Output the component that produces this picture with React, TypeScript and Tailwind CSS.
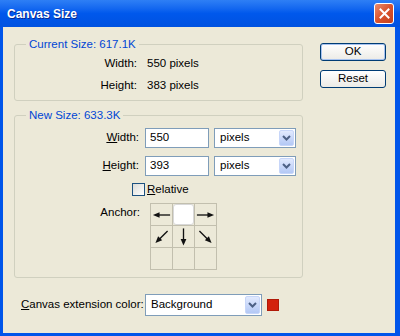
import React from 'react'

const font = "font-['Liberation_Sans',Arial,sans-serif]"

const Chevron = () => (
    <svg width="9" height="6" viewBox="0 0 9 6">
        <path d="M1 1 L4.5 4.5 L8 1" fill="none" stroke="#4D6185" strokeWidth="2" />
    </svg>
)

const Select = ({ value, width, height }: { value: string; width: string; height: string }) => (
    <div className={`flex items-center ${width} ${height} border border-[#7F9DB9] bg-white pl-[5px] pr-[1px]`}>
        <span className="flex-1 text-black">{value}</span>
        <div className="w-[15px] h-[calc(100%-2px)] rounded-[2px] bg-gradient-to-b from-[#E2EAFE] to-[#B3C8F5] border border-[#C7D6F9] flex items-center justify-center">
            <Chevron />
        </div>
    </div>
)

const Arrow = ({ angle }: { angle: number }) => (
    <svg width="22" height="22" viewBox="0 0 22 22">
        <g transform={`rotate(${angle} 11 11)`}>
            <line x1="2" y1="11" x2="15" y2="11" stroke="#111" strokeWidth="1.4" />
            <polygon points="20,11 13,8 13,14" fill="#111" />
        </g>
    </svg>
)

const GroupBox = ({ title, children, className }: { title: string; children: React.ReactNode; className?: string }) => (
    <fieldset className={`border border-[#D0D0BF] rounded-[3px] ${className || ''}`}>
        <legend className="ml-[11px] px-[3px] text-[#0046D5] leading-[13px]">{title}</legend>
        {children}
    </fieldset>
)

// anchor grid: arrow angle per cell, 'center' = selected cell
const anchorCells: (number | null | 'center')[] = [180, 'center', 0, 135, 90, 45, null, null, null]

export default function App() {
    return (
        <div className={`w-[400px] h-[336px] flex flex-col ${font} text-[11.5px] text-black`}>
            {/* title bar */}
            <div className="h-[27px] flex items-center pl-[7px] pr-[6px] bg-gradient-to-b from-[#2E7FF5] via-[#0058EC] to-[#0052E0]">
                <span className="flex-1 text-white font-bold text-[12px] [text-shadow:1px_1px_#0A2A8F]">Canvas Size</span>
                <button className="w-[20px] h-[21px] rounded-[3px] border border-white bg-gradient-to-br from-[#E98B6A] via-[#D9522C] to-[#C1411F] flex items-center justify-center">
                    <svg width="11" height="11" viewBox="0 0 11 11">
                        <path d="M1.5 1.5 L9.5 9.5 M9.5 1.5 L1.5 9.5" stroke="white" strokeWidth="2" strokeLinecap="square" />
                    </svg>
                </button>
            </div>

            {/* body */}
            <div className="flex-1 bg-[#ECE9D8] border-l-[3px] border-r-[5px] border-b-[3px] border-[#0055EA] flex flex-col pl-[11px] pr-[9px] pt-[11px]">
                <div className="flex gap-[17px]">
                    <div className="w-[289px] flex flex-col gap-[8px]">
                        <GroupBox title="Current Size: 617.1K" className="pt-[6px] pb-[7px]">
                            <div className="flex flex-col gap-[8px]">
                                <div className="flex items-center h-[14px]">
                                    <span className="w-[122px] text-right">Width:</span>
                                    <span className="ml-[10px]">550 pixels</span>
                                </div>
                                <div className="flex items-center h-[14px]">
                                    <span className="w-[122px] text-right">Height:</span>
                                    <span className="ml-[10px]">383 pixels</span>
                                </div>
                            </div>
                        </GroupBox>

                        <GroupBox title="New Size: 633.3K" className="pt-[6px] pb-[7px]">
                            <div className="flex flex-col">
                                <div className="flex items-center h-[20px]">
                                    <span className="w-[124px] text-right"><span className="underline">W</span>idth:</span>
                                    <div className="ml-[6px] w-[64px] h-[20px] border border-[#7F9DB9] bg-white pl-[4px] flex items-center">550</div>
                                    <div className="ml-[5px]"><Select value="pixels" width="w-[82px]" height="h-[20px]" /></div>
                                </div>
                                <div className="flex items-center h-[20px] mt-[8px]">
                                    <span className="w-[124px] text-right"><span className="underline">H</span>eight:</span>
                                    <div className="ml-[6px] w-[64px] h-[20px] border border-[#7F9DB9] bg-white pl-[4px] flex items-center">393</div>
                                    <div className="ml-[5px]"><Select value="pixels" width="w-[82px]" height="h-[20px]" /></div>
                                </div>
                                <div className="flex items-center h-[13px] mt-[7px] pl-[117px]">
                                    <div className="w-[13px] h-[13px] border border-[#1C5180] bg-gradient-to-br from-[#DCDCD7] to-white" />
                                    <span className="ml-[2px]"><span className="underline">R</span>elative</span>
                                </div>
                                <div className="flex items-start mt-[7px]">
                                    <span className="w-[125px] text-right mt-[1px]">Anchor:</span>
                                    <div className="ml-[10px] grid grid-cols-3 w-[67px] border-t border-l border-[#C2BFAE]">
                                        {anchorCells.map((c, i) => (
                                            <div key={i} className="w-[22px] h-[22px] border-r border-b border-[#C2BFAE] flex items-center justify-center">
                                                {c === 'center' ? (
                                                    <div className="w-[21px] h-[21px] bg-white rounded-[3px] border border-[#D8D8D8]" />
                                                ) : c !== null ? (
                                                    <Arrow angle={c} />
                                                ) : null}
                                            </div>
                                        ))}
                                    </div>
                                </div>
                            </div>
                        </GroupBox>
                    </div>

                    <div className="flex flex-col gap-[9px] pt-[5px]">
                        <button className="w-[66px] h-[18px] rounded-[3px] border border-[#003C74] bg-gradient-to-b from-white to-[#ECEBE6] shadow-[inset_0_0_0_1px_#A7C3F0] leading-none">OK</button>
                        <button className="w-[66px] h-[18px] rounded-[3px] border border-[#003C74] bg-gradient-to-b from-white to-[#ECEBE6] leading-none">Reset</button>
                    </div>
                </div>

                <div className="flex items-center mt-[16px] pl-[7px]">
                    <span className="w-[124px]"><span className="underline">C</span>anvas extension color:</span>
                    <Select value="Background" width="w-[117px]" height="h-[22px]" />
                    <div className="ml-[5px] w-[12px] h-[12px] bg-[#D3220C] border border-[#B01A08]" />
                </div>
            </div>
        </div>
    )
}
